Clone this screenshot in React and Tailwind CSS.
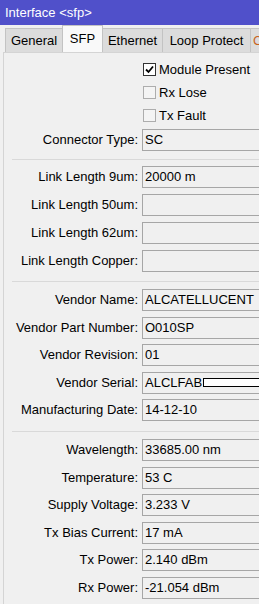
const font = { fontFamily: '"Liberation Sans", Arial, sans-serif' };

const linkRows = [
  ['Link Length 9um:', '20000 m'],
  ['Link Length 50um:', ''],
  ['Link Length 62um:', ''],
  ['Link Length Copper:', ''],
];

const vendorRows = [
  ['Vendor Name:', 'ALCATELLUCENT'],
  ['Vendor Part Number:', 'O010SP'],
  ['Vendor Revision:', '01'],
  ['Vendor Serial:', 'ALCLFAB', true],
  ['Manufacturing Date:', '14-12-10'],
];

const statusRows = [
  ['Wavelength:', '33685.00 nm'],
  ['Temperature:', '53 C'],
  ['Supply Voltage:', '3.233 V'],
  ['Tx Bias Current:', '17 mA'],
  ['Tx Power:', '2.140 dBm'],
  ['Rx Power:', '-21.054 dBm'],
];

function Field({ label, value, redacted }) {
  return (
    <div className="flex items-center h-[22px]">
      <div className="w-[139px] shrink-0 text-right pr-[1px] whitespace-nowrap overflow-hidden">{label}</div>
      <div className="ml-[3px] w-[140px] shrink-0 h-[22px] border border-[#a6a6a6] bg-[#f0f0f0] flex items-center pl-[2px] whitespace-nowrap overflow-hidden">
        <span>{value}</span>
        {redacted && <span className="ml-[1px] h-[9px] flex-1 border border-black bg-white" />}
      </div>
    </div>
  );
}

function Check({ label, checked }) {
  return (
    <div className="flex items-center h-[13px] pl-[142px]">
      <span
        className={
          'w-[13px] h-[13px] shrink-0 border flex items-center justify-center ' +
          (checked ? 'border-[#333333] bg-white' : 'border-[#adadad] bg-[#f4f4f4]')
        }
      >
        {checked && (
          <svg width="9" height="9" viewBox="0 0 9 9">
            <path d="M1 4.5 L3.5 7 L8 1.5" fill="none" stroke="#000" strokeWidth="1.8" />
          </svg>
        )}
      </span>
      <span className="ml-[3px] whitespace-nowrap">{label}</span>
    </div>
  );
}

function Sep() {
  return <div className="ml-[8px] h-px bg-[#d9d9d9]" />;
}

export default function App() {
  return (
    <div className="w-[259px] h-[604px] overflow-hidden bg-[#f0f0f0] text-[13px] text-black" style={font}>
      <div className="h-[25px] bg-[#5050ca] text-white flex items-center pl-[5px]">Interface &lt;sfp&gt;</div>

      <div className="h-[27px] flex items-end pl-[5px] whitespace-nowrap overflow-hidden">
        <div className="h-[24px] w-[57px] shrink-0 bg-[#dcdcdc] border-t border-l border-[#c3c3c3] flex items-center justify-center">General</div>
        <div className="h-[27px] w-[41px] shrink-0 bg-[#f9f9f9] border-t border-l border-r border-[#c3c3c3] flex items-start justify-center pt-[3px]">SFP</div>
        <div className="h-[24px] w-[59px] shrink-0 bg-[#dcdcdc] border-t border-[#c3c3c3] flex items-center justify-center">Ethernet</div>
        <div className="h-[24px] w-[88px] shrink-0 bg-[#dcdcdc] border-t border-l border-[#c3c3c3] flex items-center justify-center">Loop Protect</div>
        <div className="h-[24px] w-[20px] shrink-0 bg-[#dcdcdc] border-t border-l border-[#c3c3c3] flex items-center pl-[2px] text-[#c8641e]">C</div>
      </div>

      <div className="ml-[3px] border-l border-t border-[#d4d4d4] h-full">
        <div className="flex flex-col gap-[10px] pt-[10px] -ml-[3px]">
          <Check label="Module Present" checked />
          <Check label="Rx Lose" />
          <Check label="Tx Fault" />
        </div>
        <div className="-ml-[4px] mt-[7px]">
          <Field label="Connector Type:" value="SC" />
        </div>
        <div className="mt-[8px]"><Sep /></div>
        <div className="-ml-[4px] mt-[6px] flex flex-col gap-[6px]">
          {linkRows.map(([l, v]) => <Field key={l} label={l} value={v} />)}
        </div>
        <div className="mt-[9px]"><Sep /></div>
        <div className="-ml-[4px] mt-[7px] flex flex-col gap-[5.5px]">
          {vendorRows.map(([l, v, r]) => <Field key={l} label={l} value={v} redacted={r} />)}
        </div>
        <div className="mt-[10px]"><Sep /></div>
        <div className="-ml-[4px] mt-[7px] flex flex-col gap-[5.5px]">
          {statusRows.map(([l, v]) => <Field key={l} label={l} value={v} />)}
        </div>
      </div>
    </div>
  );
}
